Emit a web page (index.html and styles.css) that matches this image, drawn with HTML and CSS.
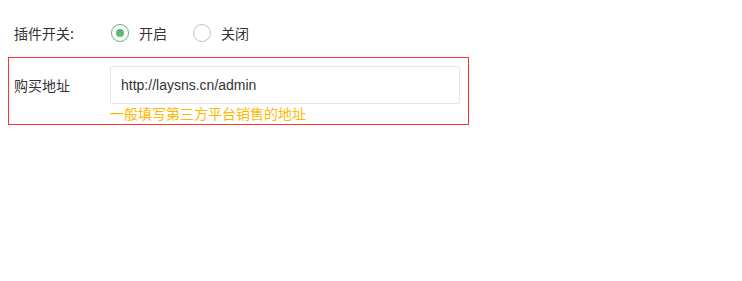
FILE: index.html
```
<!DOCTYPE html>
<html lang="zh-CN">
<head>
    <meta charset="UTF-8">
    <meta name="viewport" content="width=device-width, initial-scale=1.0">
    <title>插件设置</title>
    <link rel="stylesheet" href="styles.css">
</head>
<body>
    <form class="plugin-form">
        <div class="form-item">
            <label class="form-label">插件开关:</label>
            <div class="form-block">
                <label class="radio checked"><span class="radio-icon"></span>开启</label>
                <label class="radio"><span class="radio-icon"></span>关闭</label>
            </div>
        </div>

        <div class="form-item highlight">
            <label class="form-label" for="buyurl">购买地址</label>
            <div class="form-block">
                <input type="text" id="buyurl" class="form-input" value="http://laysns.cn/admin">
                <div class="form-tip">一般填写第三方平台销售的地址</div>
            </div>
        </div>
    </form>
</body>
</html>
```

FILE: styles.css
```
body {
    margin: 8px;
    font-family: "Liberation Sans", "Noto Sans CJK SC", sans-serif;
    font-size: 14px;
    color: #333;
    background-color: #fff;
}
.plugin-form {
    padding-top: 6px;
    width: 461px;
}
.form-item {
    display: flex;
    align-items: flex-start;
    padding-left: 6px;
}
.form-item + .form-item {
    margin-top: 5px;
}
.form-label {
    width: 96px;
    flex-shrink: 0;
    line-height: 38px;
    font-family: "Noto Sans CJK SC", sans-serif;
}
.form-block {
    flex: 1;
    display: flex;
    flex-direction: column;
}
.form-item:first-child .form-block {
    flex-direction: row;
    align-items: center;
    height: 38px;
}
.radio {
    display: flex;
    align-items: center;
    margin-left: 1px;
    margin-right: 25px;
    font-family: "Noto Sans CJK SC", sans-serif;
    cursor: pointer;
}
.radio-icon {
    width: 16px;
    height: 16px;
    border: 1px solid #c2c2c2;
    border-radius: 50%;
    margin-right: 10px;
    position: relative;
}
.radio.checked .radio-icon {
    border-color: #5fb878;
}
.radio.checked .radio-icon::after {
    content: "";
    position: absolute;
    left: 4px;
    top: 4px;
    width: 8px;
    height: 8px;
    border-radius: 50%;
    background-color: #5fb878;
}
.highlight {
    border: 1px solid #ff3333;
    padding: 8px 8px 1px 5px;
}
.form-input {
    box-sizing: border-box;
    height: 38px;
    width: 100%;
    padding: 0 10px;
    border: 1px solid #e6e6e6;
    border-radius: 2px;
    font-family: "Liberation Sans", "Noto Sans CJK SC", sans-serif;
    font-size: 14px;
    color: #333;
    outline: none;
}
.form-tip {
    line-height: 19px;
    color: #ffb800;
    font-family: "Noto Sans CJK SC", sans-serif;
}
```
